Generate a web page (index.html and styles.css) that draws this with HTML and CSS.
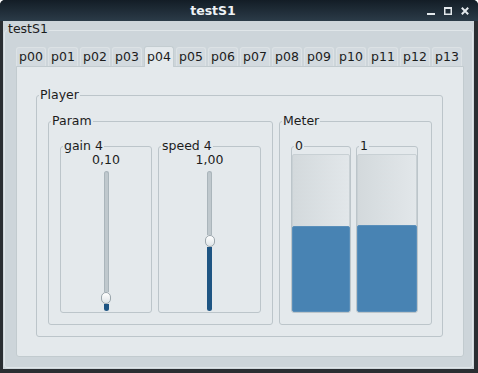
FILE: index.html
```html
<!DOCTYPE html>
<html lang="en">
<head>
    <meta charset="UTF-8">
    <title>testS1</title>
    <link rel="stylesheet" href="styles.css">
</head>
<body>
    <div class="window">
        <!-- Barra de titulo -->
        <div class="titlebar">
            <span class="title">testS1</span>
            <div class="controls">
                <svg width="8" height="8" viewBox="0 0 8 8"><rect x="0" y="6" width="8" height="2" fill="#e3e8ec"/></svg>
                <svg width="8" height="8" viewBox="0 0 8 8"><rect x="0.75" y="0.75" width="6.5" height="6.5" fill="none" stroke="#e3e8ec" stroke-width="1.5"/><rect x="0" y="0" width="8" height="2" fill="#e3e8ec"/></svg>
                <svg width="8" height="8" viewBox="0 0 8 8"><path d="M0.8 0.8 L7.2 7.2 M7.2 0.8 L0.8 7.2" stroke="#e3e8ec" stroke-width="2"/></svg>
            </div>
        </div>

        <div class="client">
            <div class="group outer">
                <div class="group-title">testS1</div>

                <div class="tabs">
                    <div class="tab">p00</div>
                    <div class="tab">p01</div>
                    <div class="tab">p02</div>
                    <div class="tab">p03</div>
                    <div class="tab active">p04</div>
                    <div class="tab">p05</div>
                    <div class="tab">p06</div>
                    <div class="tab">p07</div>
                    <div class="tab">p08</div>
                    <div class="tab">p09</div>
                    <div class="tab">p10</div>
                    <div class="tab">p11</div>
                    <div class="tab">p12</div>
                    <div class="tab">p13</div>
                </div>

                <div class="pane">
                    <div class="group player">
                        <div class="group-title">Player</div>
                        <div class="row">
                            <!-- Parametros -->
                            <div class="group param">
                                <div class="group-title">Param</div>
                                <div class="row">
                                    <div class="group knob gain">
                                        <div class="group-title">gain 4</div>
                                        <div class="value">0,10</div>
                                        <div class="slider">
                                            <div class="groove"></div>
                                            <div class="handle"></div>
                                            <div class="fill" style="height: 7px;"></div>
                                        </div>
                                    </div>
                                    <div class="group knob speed">
                                        <div class="group-title">speed 4</div>
                                        <div class="value">1,00</div>
                                        <div class="slider">
                                            <div class="groove"></div>
                                            <div class="handle"></div>
                                            <div class="fill" style="height: 64px;"></div>
                                        </div>
                                    </div>
                                </div>
                            </div>

                            <!-- Medidores -->
                            <div class="group meter">
                                <div class="group-title">Meter</div>
                                <div class="row">
                                    <div class="group channel ch0">
                                        <div class="group-title">0</div>
                                        <div class="bar"><div class="level" style="height: 84px;"></div></div>
                                    </div>
                                    <div class="group channel ch1">
                                        <div class="group-title">1</div>
                                        <div class="bar"><div class="level" style="height: 85px;"></div></div>
                                    </div>
                                </div>
                            </div>
                        </div>
                    </div>
                </div>
            </div>
        </div>
    </div>
</body>
</html>
```

FILE: styles.css
```css
body {
    margin: 0;
    background: #ffffff;
    font-family: "DejaVu Sans", sans-serif;
    font-size: 12.5px;
    color: #1c1c1c;
}

.window {
    width: 478px;
    height: 373px;
    display: flex;
    flex-direction: column;
    background: #2a2e32;
    border-radius: 5px 5px 0 0;
    overflow: hidden;
}

/* Barra de titulo */
.titlebar {
    height: 21px;
    flex: none;
    display: flex;
    align-items: center;
    background: linear-gradient(#131d26, #2b3b48);
}

.title {
    flex: 1;
    text-align: center;
    color: #eef2f5;
    font-weight: bold;
    line-height: 21px;
}

.controls {
    display: flex;
    gap: 9px;
    padding: 0 9px 0 1px;
}

.controls svg {
    display: block;
}

.client {
    flex: 1;
    margin: 0 4px 4px 3px;
    padding: 0 1px;
    background: #cdd5da;
}

/* Cajas de grupo */
.group {
    border: 1px solid #bcc5ca;
    border-radius: 3px;
}

.group-title {
    width: fit-content;
    margin: -8px 0 0 2px;
    padding: 0 1px;
    line-height: 14px;
    background: #e4e9ec;
}

.row {
    display: flex;
}

.outer {
    margin-top: 9px;
    border-color: #e0e6e9;
    padding: 0 8px 10px 11px;
}

.outer > .group-title {
    margin: -9px 0 0 -9px;
    background: #cdd5da;
}

/* Pestañas */
.tabs {
    display: flex;
    align-items: flex-end;
    gap: 2px;
    margin-top: 10px;
}

.tab {
    width: 30px;
    height: 19px;
    box-sizing: border-box;
    line-height: 18px;
    text-align: center;
    background: #d3dadf;
    border: 1px solid #dce2e5;
    border-bottom: none;
    border-radius: 3px 3px 0 0;
}

.tab.active {
    position: relative; /* para quedar encima del borde del panel */
    height: 21px;
    line-height: 20px;
    margin-bottom: -1px;
    background: #e4e9ec;
    border-color: #c4cdd1;
}

.pane {
    background: #e4e9ec;
    border: 1px solid #c2cbcf;
    border-radius: 0 0 3px 3px;
    padding: 28px 20px 19px 19px;
}

.player > .row {
    margin-top: 19px;
    padding: 0 10px 11px 11px;
    gap: 6px;
}

.param {
    flex: none;
    width: 225px;
    box-sizing: border-box;
}

.meter {
    flex: 1;
    display: flex;
    flex-direction: column;
}

.param > .row,
.meter > .row {
    margin-top: 18px;
    padding: 0 11px 11px 11px;
}

.param > .row {
    gap: 6px;
}

.meter > .row {
    flex: 1;
    gap: 5px;
    padding-right: 12px;
}

/* Deslizadores */
.gain {
    flex: none;
    width: 92px;
    box-sizing: border-box;
}

.speed {
    flex: 1;
}

.value {
    text-align: center;
    line-height: 14px;
}

.slider {
    width: 12px;
    height: 140px;
    margin: 4px auto 1px auto;
    display: flex;
    flex-direction: column;
    align-items: center;
}

.groove {
    flex: 1;
    width: 5px;
    box-sizing: border-box;
    background: #bfc8cd;
    border: 1px solid #aab5bb;
    border-bottom: none;
    border-radius: 3px 3px 0 0;
}

.handle {
    flex: none;
    width: 10px;
    height: 12px;
    box-sizing: border-box;
    border: 1px solid #9ba6ac;
    border-radius: 5px;
    background: linear-gradient(#ffffff, #dfe5e8);
}

.fill {
    flex: none;
    width: 5px;
    background: #1e5583;
    border-radius: 0 0 3px 3px;
}

/* Barras del medidor */
.channel {
    display: flex;
    flex-direction: column;
    box-sizing: border-box;
}

.ch0 {
    width: 60px;
}

.ch1 {
    width: 62px;
}

.bar {
    flex: 1;
    margin-top: 1px;
    display: flex;
    flex-direction: column;
    justify-content: flex-end;
    border: 1px solid #c8d0d4;
    border-radius: 2px;
    background: linear-gradient(90deg, #d3d9dc, #e2e7ea);
}

.level {
    margin: 0 -1px -1px -1px;
    background: #4883b3;
    border: 1px solid #5a8fba;
    border-radius: 2px;
}
```
